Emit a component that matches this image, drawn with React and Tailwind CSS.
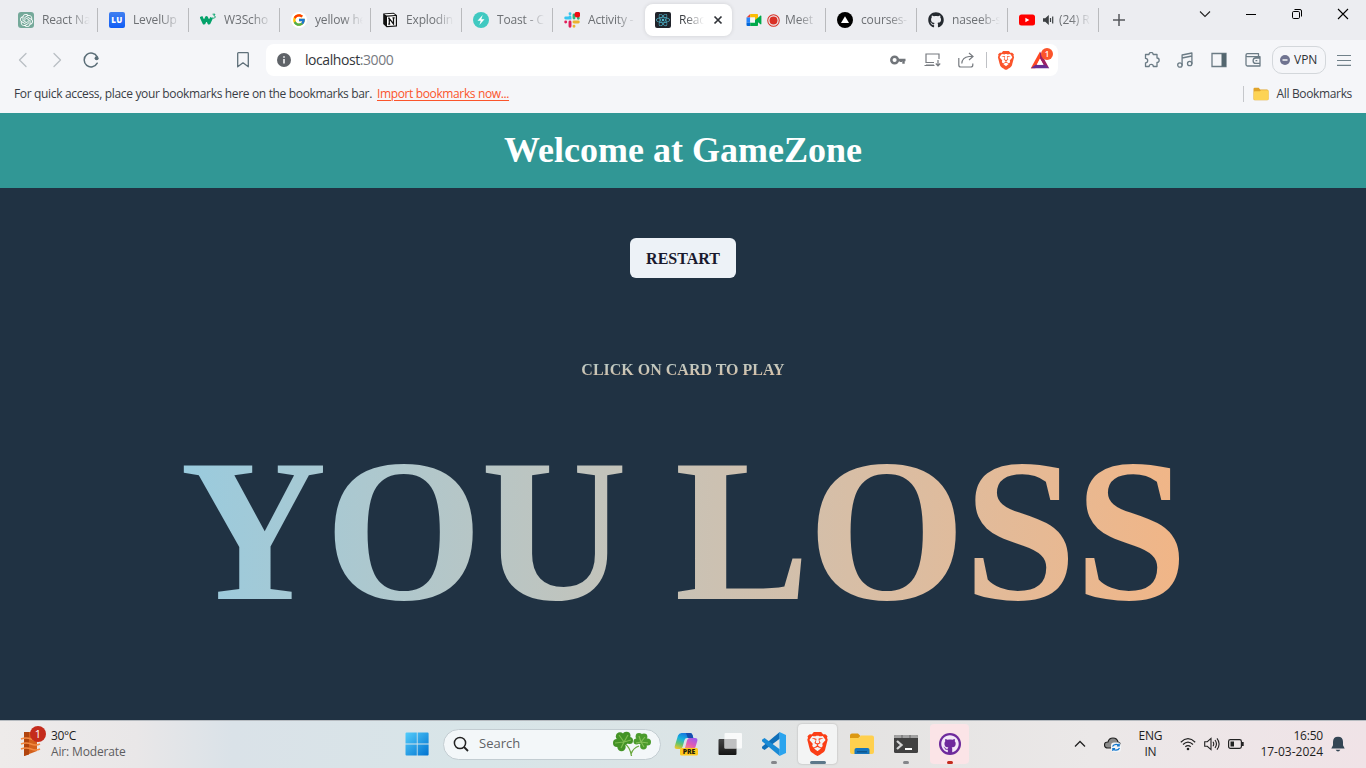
import React from "react";
import { FaReact, FaGithub } from "react-icons/fa";
import { FaBrave } from "react-icons/fa6";
import { SiOpenai } from "react-icons/si";
import { FcGoogle } from "react-icons/fc";

const Favicon = {
  gpt: <span className="flex size-4 items-center justify-center rounded-[3px] bg-[#75a99a]"><SiOpenai className="size-[13px] text-white" /></span>,
  levelup: <span className="flex size-4 items-center justify-center rounded-[2px] bg-gradient-to-b from-[#3f7ff0] to-[#0d5cf5] text-[8px] font-extrabold tracking-[0.3px] text-white">LU</span>,
  w3: (
    <svg viewBox="0 0 16 16" className="size-4">
      <path d="M1 4.6 4 11 6.500 5.600 9 11 11.600 5.600" fill="none" stroke="#04a26a" strokeWidth="3" strokeLinejoin="round" />
      <path d="M12.6 2.200H15l-1.100 1.500c1.700 0 1.600 2.500-.1 2.500-.6 0-1-.2-1.300-.6" fill="none" stroke="#04a26a" strokeWidth="1" />
    </svg>
  ),
  google: <span className="flex size-4 items-center justify-center rounded-full bg-white"><FcGoogle className="size-[14px]" /></span>,
  notion: (
    <svg viewBox="0 0 16 16" className="size-4">
      <path d="M1.2 1.4 11.6.8l3.4 2.5v11.2l-10.4.8-3.4-3.4z" fill="#111" />
      <path d="M2.3 2.2 11.4 1.7l1.9 1.4-8.7.5z" fill="#fff" />
      <path d="M5 4.7l8.8-.6v9.3L5 14.1z" fill="#fff" />
      <path d="M7.3 12V6.5l4.2 5.4V5.8M6.2 6.4h1.6M10.5 5.8h2.2M6.2 12h2" fill="none" stroke="#111" strokeWidth="1.25" />
    </svg>
  ),
  toast: (
    <svg viewBox="0 0 16 16" className="size-4">
      <circle cx="8" cy="8" r="8" fill="#40c9c1" />
      <path d="M9.7 3 4.5 8.8h3.2L6.4 13l5.1-5.8H8.3z" fill="#fff" />
    </svg>
  ),
  slack: (
    <svg viewBox="0 0 16 16" className="size-4">
      <g strokeWidth="2.900" strokeLinecap="round" fill="none">
        <path d="M6 1.700h.01M1.700 6H6V5" stroke="#36c5f0" />
        <path d="M10 6V3M14.300 6.300h.01" stroke="#2eb67d" />
        <path d="M10 10h4.300M10 14.300h.01" stroke="#ecb22e" />
        <path d="M6 10v4.300M1.700 10h.01" stroke="#e01e5a" />
      </g>
      <circle cx="13.400" cy="2.600" r="2.900" fill="#f00b12" />
    </svg>
  ),
  react: <span className="flex size-4 items-center justify-center rounded-[2px] bg-[#20232a]"><FaReact className="size-[14px] text-[#4fb9d0]" /></span>,
  meet: (
    <svg viewBox="0 0 16 16" className="size-4">
      <path d="M.5 5.500 4.200 2v3.500z" fill="#ea4335" />
      <path d="M4.200 2h6.800c.6 0 1 .4 1 1v4L9 9V5.500H4.200z" fill="#fbbc04" />
      <path d="M.5 5.500h3.700v5H.5z" fill="#2684fc" />
      <path d="M.5 10.500h3.700V14H1.500a1 1 0 0 1-1-1z" fill="#0066da" />
      <path d="M4.200 10.500H9V8l3-2.300 2.500-2.100c.4-.3.9 0 .9.5v7.700c0 .5-.5.8-.9.5l-2.500-2V13c0 .6-.4 1-1 1H4.200z" fill="#00a94b" />
      <path d="M4.200 5.500H9v5H4.200z" fill="#f4f6f8" />
    </svg>
  ),
  vercel: (
    <svg viewBox="0 0 16 16" className="size-4">
      <circle cx="8" cy="8" r="8" fill="#000" />
      <path d="M8 4.2 12 11H4z" fill="#fff" />
    </svg>
  ),
  github: <FaGithub className="size-4 text-[#24292f]" />,
  youtube: (
    <svg viewBox="0 0 16 16" className="size-4">
      <rect x="0" y="2.5" width="16" height="11" rx="2.5" fill="#f00" />
      <path d="M6.4 5.8v4.4L10.3 8z" fill="#fff" />
    </svg>
  ),
};

function TabTitle({ children, className = "" }) {
  return (
    <span className={"block min-w-0 flex-1 whitespace-nowrap tracking-[-0.15px] [mask-image:linear-gradient(to_right,#000_calc(100%-20px),transparent)] " + className}>
      {children}
    </span>
  );
}

function Tab({ icon, title, extra, bare }) {
  return (
    <div className="flex h-10 w-[91px] shrink-0 items-center pl-[11px]">
      {Favicon[icon]}
      {extra}
      <TabTitle className={extra ? "ml-[5px] text-[#6d7074]" : "ml-2 text-[#6d7074]"}>{title}</TabTitle>
      <span className={bare ? "ml-[7px] h-6 w-px" : "ml-[7px] h-6 w-px bg-[#b9babd]"} />
    </div>
  );
}

function Speaker() {
  return (
    <svg viewBox="0 0 12 12" className="ml-[7px] size-3 shrink-0">
      <path d="M1 4.200h2.200L6.800 1v10L3.200 7.800H1z" fill="#3c4043" />
      <path d="M8.500 4v4M10.700 2.600v6.800" stroke="#3c4043" strokeWidth="1.200" />
    </svg>
  );
}

function TabStrip() {
  return (
    <div className="flex h-10 bg-[#ecedf1] pl-[7px] text-[12px]">
      <Tab icon="gpt" title="React Na" />
      <Tab icon="levelup" title="LevelUp |" />
      <Tab icon="w3" title="W3Scho" />
      <Tab icon="google" title="yellow he" />
      <Tab icon="notion" title="Explodin" />
      <Tab icon="toast" title="Toast - C" />
      <Tab icon="slack" title="Activity -" bare />
      <div className="flex w-[91px] shrink-0 items-center">
        <div className="ml-[1px] flex h-8 w-[87px] items-center rounded-lg bg-white pl-[10px] shadow-[0_0_4px_rgba(0,0,0,0.12)]">
          {Favicon.react}
          <TabTitle className="ml-2 text-[#3b3e43]">Reac</TabTitle>
          <svg viewBox="0 0 10 10" className="mr-[9px] ml-[9px] size-[10px] shrink-0">
            <path d="M1.5 1.5l7 7M8.5 1.5l-7 7" stroke="#303338" strokeWidth="1.7" />
          </svg>
        </div>
      </div>
      <Tab
        icon="meet"
        title="Meet"
        extra={
          <svg viewBox="0 0 14 14" className="ml-[5px] size-[13px] shrink-0">
            <circle cx="7" cy="7" r="6.2" fill="none" stroke="#d93025" strokeWidth="1.1" />
            <circle cx="7" cy="7" r="4.3" fill="#d93025" />
          </svg>
        }
      />
      <Tab icon="vercel" title="courses-" />
      <Tab icon="github" title="naseeb-s" />
      <Tab icon="youtube" title="(24) R" extra={<Speaker />} />
      <div className="flex w-10 items-center justify-center">
        <svg viewBox="0 0 12 12" className="size-3">
          <path d="M6 0v12M0 6h12" stroke="#55585c" strokeWidth="1.5" />
        </svg>
      </div>
      <div className="ml-auto flex h-7 items-center text-black">
        <svg viewBox="0 0 12 12" className="mr-[34px] size-3"><path d="M1 3.5l5 5 5-5" fill="none" stroke="#222" strokeWidth="1.100" /></svg>
        <svg viewBox="0 0 12 12" className="mr-[34px] size-3"><path d="M1 6.5h10" stroke="#000" /></svg>
        <svg viewBox="0 0 12 12" className="mr-[34px] size-3">
          <rect x="1.5" y="3.5" width="7" height="7" rx="1.2" fill="none" stroke="#000" />
          <path d="M3.5 1.5H9A1.5 1.5 0 0 1 10.500 3v5.500" fill="none" stroke="#000" />
        </svg>
        <svg viewBox="0 0 12 12" className="mr-[17px] size-3"><path d="M1 1l10 10M11 1L1 11" stroke="#000" strokeWidth="1.1" /></svg>
      </div>
    </div>
  );
}

const stroke = { fill: "none", stroke: "#6b7b85", strokeWidth: 1.3, strokeLinecap: "round", strokeLinejoin: "round" };

function Toolbar() {
  return (
    <div className="flex h-10 items-center bg-[#f5f6f9]">
      <svg viewBox="0 0 16 16" className="ml-[15px] size-4"><path d="M11 1.500 4.500 8l6.500 6.500" {...stroke} stroke="#b9bfc4" /></svg>
      <svg viewBox="0 0 16 16" className="ml-[18px] size-4"><path d="M5 1.500 11.500 8 5 14.500" {...stroke} stroke="#b9bfc4" /></svg>
      <svg viewBox="0 0 16 16" className="ml-[18px] size-4">
        <path d="M14.200 4.800A6.900 6.900 0 1 0 14.200 11.200" {...stroke} stroke="#5b6e78" strokeWidth="1.500" />
        <circle cx="13.600" cy="6.200" r="2" fill="#5b6e78" />
      </svg>
      <svg viewBox="0 0 16 16" className="ml-[136px] size-4"><path d="M2.700 1.500Q2.700.7 3.500.7h9q.8 0 .8.8v13.300L8 10.800l-5.300 4z" {...stroke} stroke="#5f707a" /></svg>
      <div className="ml-[15px] flex h-8 w-[792px] items-center rounded-lg bg-white">
        <svg viewBox="0 0 14 14" className="ml-[11px] size-[14px]">
          <circle cx="7" cy="7" r="7" fill="#5f6368" />
          <path d="M7 6v4.500M7 3.200v1.500" stroke="#fff" strokeWidth="1.500" />
        </svg>
        <span className="ml-[14px] text-[14px] leading-[18px] tracking-[-0.43px] text-[#33363b]">localhost<span className="text-[#777a7f]">:3000</span></span>
        <div className="ml-auto flex items-center">
          <svg viewBox="0 0 16 10" className="mr-[18px] h-[10px] w-4">
            <circle cx="4.600" cy="5" r="3.300" fill="none" stroke="#71757a" strokeWidth="2.500" />
            <path d="M8 5h7.500M13.500 5v3.800M10.800 5v2" stroke="#71757a" strokeWidth="2.400" fill="none" />
          </svg>
          <svg viewBox="0 0 17 14" className="mr-[17px] h-[14px] w-[17px]">
            <path d="M15 6V1H2v8.500h8M.5 12.500h10M2 12h8M14 7v5.500M11.800 10.500 14 12.800l2.200-2.300" fill="none" stroke="#777b80" strokeWidth="1.200" />
          </svg>
          <svg viewBox="0 0 16 16" className="mr-3 size-4">
            <path d="M.8 6v7q0 2 2 2h10q2 0 2-2v-1.500M3.800 11.500Q4.200 5.200 11 4.500h3.500M11 1l4 3.500L11 8" fill="none" stroke="#777b80" strokeWidth="1.200" />
          </svg>
          <span className="mr-[10px] h-4 w-px bg-[#bfc1c5]" />
          <FaBrave className="mr-[15px] h-[19px] w-[18px] text-[#fb542b]" />
          <span className="relative mr-[8px] block h-5 w-[20px]">
            <svg viewBox="0 0 20 20" className="size-5">
              <path d="M10 1.500.8 18.200h4.500L10 9z" fill="#ff4724" />
              <path d="M10 1.500v7.500l4 6.500 5.200 2.700z" fill="#9e1f63" />
              <path d="M.8 18.200h18.400L15.200 14.800H5.500z" fill="#662d91" />
              <path d="M10 8.500l3.300 6.300H6.700z" fill="#fff" />
            </svg>
            <span className="absolute -top-[2px] left-[11px] flex size-3 items-center justify-center rounded-full bg-[#fb542b] text-[8px] leading-none font-semibold text-white">1</span>
          </span>
        </div>
      </div>
      <div className="ml-auto flex items-center">
        <svg viewBox="0 0 16 16" className="mr-[17px] size-4">
          <path d="M1.500 2.500h3.500a2 2 0 1 1 4.200 0h3.800v3.500a2 2 0 1 1 0 4.300v4.200H9.300a2 2 0 0 0-4.200 0H1.500v-3.700a2.200 2.200 0 0 0 0-4.400z" {...stroke} />
        </svg>
        <svg viewBox="0 0 16 16" className="mr-[18px] size-4">
          <circle cx="2.900" cy="13" r="2.200" {...stroke} /><circle cx="12.700" cy="11.500" r="2.200" {...stroke} />
          <path d="M5.100 13V3l9.800-2v10.500M5.100 6l9.800-2" {...stroke} />
        </svg>
        <svg viewBox="0 0 16 16" className="mr-[18px] size-4">
          <path d="M1 1.500h14v13H1z" fill="none" stroke="#6b7b85" strokeWidth="1.300" /><path d="M10.500 1.500H15v13h-4.500z" fill="#53666f" />
        </svg>
        <svg viewBox="0 0 16 16" className="mr-[11px] size-4">
          <path d="M15 6V4.700H2.500A1.500 1.500 0 0 1 2.500 1.700H13.500v3M1 3v9.500q0 1.500 1.500 1.500H15v-2.500M15 6h-4.200a2.700 2.700 0 0 0 0 5.400H15z" {...stroke} />
          <path d="M11 8.700h.8" {...stroke} />
        </svg>
        <span className="flex h-7 w-[54px] items-center rounded-[10px] border border-[#d3d7db] pl-[7px] text-[12px] text-[#2d3035]">
          <svg viewBox="0 0 10 10" className="mr-1 size-[10px]"><circle cx="5" cy="5" r="5" fill="#6f7390" /><path d="M2.500 5h5" stroke="#fff" strokeWidth="1.400" /></svg>
          VPN
        </span>
        <svg viewBox="0 0 14 12" className="mr-[15px] ml-[11px] h-3 w-[14px]"><path d="M0 1.500h14M0 6.500h14M0 11.400h14" stroke="#71818a" strokeWidth="1.200" /></svg>
      </div>
    </div>
  );
}

function Folder() {
  return (
    <svg viewBox="0 0 16 14" className="mr-2 h-[14px] w-4">
      <path d="M.5 2Q.5.800 1.700.800h4L7.200 2.500H14Q15.500 2.500 15.500 4v8q0 1.300-1.300 1.300H1.800Q.5 13.300.5 12z" fill="#e0a32a" />
      <path d="M.8 5.500Q.8 4.300 2 4.300h5l1-1h6.500q1 0 1 1v7.500q0 1.200-1.200 1.200H2Q.8 13 .8 12z" fill="#fdd354" />
    </svg>
  );
}

function Bookmarks() {
  return (
    <div className="flex h-[33px] items-center bg-[#f5f6f9] pr-[14px] pb-[6px] pl-[14px] text-[12px] text-[#393d45]">
      <span className="tracking-[-0.34px] whitespace-nowrap">For quick access, place your bookmarks here on the bookmarks bar.</span>
      <span className="ml-[5px] tracking-[-0.37px] whitespace-nowrap text-[#fb542b] underline underline-offset-2">Import bookmarks now...</span>
      <span className="mr-[9px] ml-auto h-4 w-px bg-[#c5c7cb]" />
      <Folder />
      <span className="tracking-[-0.35px]">All Bookmarks</span>
    </div>
  );
}

function Game() {
  return (
    <main className="flex h-[607px] flex-col items-center bg-[#203243] font-['Liberation_Serif',serif] font-bold">
      <h1 className="flex h-[75px] w-full items-center justify-center bg-[#319795] pb-[2px] text-[36px] text-white">Welcome at GameZone</h1>
      <button className="mt-[50px] flex h-10 w-[106px] items-center justify-center rounded-md bg-[#edf2f7] pt-[2px] text-[16px] text-[#1a1a2e]">RESTART</button>
      <p className="mt-[80px] w-full bg-gradient-to-br from-[#90d2e6] to-[#f8b480] bg-clip-text text-center text-[16px] leading-6 text-transparent">CLICK ON CARD TO PLAY</p>
      <p className="mt-[29px] w-[1006px] bg-gradient-to-r from-[#99cbde] to-[#f1b586] bg-clip-text text-center text-[203px] leading-[240px] tracking-[-1.900px] whitespace-nowrap text-transparent">YOU LOSS</p>
    </main>
  );
}

function Dock({ children, active, bar, className = "" }) {
  return (
    <div className={"relative flex h-10 w-[39px] items-center justify-center rounded-[4px] " + (active || "") + " " + className}>
      {children}
      {bar && <span className={"absolute bottom-0 h-[3px] rounded-full " + bar} />}
    </div>
  );
}

function Taskbar() {
  return (
    <footer className="flex h-12 items-center border-t border-[#b6bbc0] bg-[linear-gradient(90deg,#eeebea_0%,#e9e7e8_10%,#dae2e8_17%,#d8e5e8_35%,#dbe4e6_50%,#e4e3e2_62%,#ebe8e8_80%,#f0e3e7_100%)] pb-px text-[12px] text-[#1e1e1e]">
      <div className="relative ml-[20px] flex h-full w-[385px] items-center">
        <svg viewBox="0 0 22 26" className="h-[26px] w-[22px]">
          <path d="M4 1h13v19L4 25z" fill="#d3601c" />
          <path d="M4 1h5v22.500L4 25z" fill="#b1440d" />
          <path d="M1 8q5-2 10 0t9 0M1 13q5-2 10 0t9 0M1 18q5-2 10 0t9 0" fill="none" stroke="#f28a43" strokeWidth="1.500" />
        </svg>
        <span className="absolute top-[5px] left-[10px] flex size-4 items-center justify-center rounded-full bg-[#c42b1c] text-[11px] text-white">1</span>
        <div className="ml-[9px] leading-4">
          <div className="tracking-[-0.400px]">30°C</div>
          <div className="tracking-[-0.150px] text-[#5d5d60]">Air: Moderate</div>
        </div>
      </div>
      <svg viewBox="0 0 24 24" className="size-6">
        <defs><linearGradient id="win" x1="0" y1="0" x2="1" y2="1"><stop offset="0" stopColor="#54cdfb" /><stop offset="1" stopColor="#0072d0" /></linearGradient></defs>
        <path d="M1.500.5h10.300v11H.5v-10q0-1 1-1zM12.600.5h10q1 0 1 1v10h-11zM.5 12.500h11.300v11H1.500q-1 0-1-1zM12.600 12.500h11v10q0 1-1 1h-10z" fill="url(#win)" />
      </svg>
      <div className="ml-[14px] flex h-[31px] w-[218px] items-center rounded-full border border-[#c3cdd2] bg-[#f3f7f9] pl-[9px] text-[13px] text-[#5f6265]">
        <svg viewBox="0 0 16 16" className="size-4"><circle cx="7" cy="7" r="5.600" fill="none" stroke="#222" strokeWidth="1.500" /><path d="M11 11l4 4" stroke="#222" strokeWidth="1.800" /></svg>
        <span className="ml-[10px]">Search</span>
        <svg viewBox="0 0 40 26" className="mr-[8px] ml-auto h-[26px] w-10">
          <path d="M13 13q5 3 6.500 12M27 15q-6 2-8 8" fill="none" stroke="#69a83c" strokeWidth="1.300" />
          <g fill="#439326">
            <circle cx="8" cy="5.500" r="4.200" /><circle cx="14.500" cy="4.800" r="4" /><circle cx="5" cy="12" r="4" />
            <circle cx="9.500" cy="16" r="4.200" /><circle cx="17.500" cy="9.500" r="3.500" /><circle cx="12" cy="10" r="4" />
          </g>
          <path d="M12 11 7 4M12 11l-9 1M12 11l-3 6M12 11l4-7M12 11l7-2" stroke="#7dbc50" strokeWidth="1.200" />
          <g fill="#4b9b2d">
            <circle cx="27" cy="5.500" r="3.400" /><circle cx="32" cy="5.800" r="3.400" /><circle cx="24.500" cy="10.500" r="3" />
            <circle cx="35.500" cy="11" r="3.500" /><circle cx="31.500" cy="15" r="3.400" /><circle cx="29.500" cy="10" r="3.500" />
          </g>
          <path d="M29 11l-2-6M29 11l4-5M29 11l-5 1M29 11l7 1M29 11l3 5" stroke="#86c159" strokeWidth="1.100" />
        </svg>
      </div>
      <div className="ml-[5px] flex items-center">
        <Dock>
          <svg viewBox="0 0 24 24" className="size-6">
            <defs>
              <linearGradient id="cpa" x1="0.600" y1="0" x2="0.200" y2="1"><stop stopColor="#1673df" /><stop offset=".4" stopColor="#18b3dc" /><stop offset=".7" stopColor="#65c36b" /><stop offset="1" stopColor="#ecc62c" /></linearGradient>
              <linearGradient id="cpb" x1="0.800" y1="0" x2="0.200" y2="1"><stop stopColor="#9a5cf0" /><stop offset=".5" stopColor="#e05bb4" /><stop offset="1" stopColor="#ff9868" /></linearGradient>
            </defs>
            <path d="M7.500 1H16q2 0 2.500 2l.8 3H13q-2 0-2.500 2L8.500 15q-.7 2-2.500 2H3q-3 0-2.200-3L4 3.500Q5 1 7.500 1z" fill="url(#cpa)" />
            <path d="M12 1h4q2 0 2.500 2l.8 3h-5.500z" fill="#174fae" />
            <path d="M15.500 6H21q3 0 2.300 3l-2 6.500Q20.500 18 18 18H8.500q2 0 2.500-2l2-7.500Q13.500 6 15.500 6z" fill="url(#cpb)" />
            <rect x="6" y="16" width="18" height="7.500" rx="1.500" fill="#ffc91e" />
            <text x="15" y="22.200" textAnchor="middle" fontSize="6.800" fontWeight="800" fill="#221c08">PRE</text>
          </svg>
        </Dock>
        <Dock className="ml-[5px]">
          <svg viewBox="0 0 24 24" className="size-6">
            <defs><linearGradient id="dk" x1="0" y1="0" x2="0" y2="1"><stop stopColor="#444" /><stop offset="1" stopColor="#151515" /></linearGradient></defs>
            <rect x="0.500" y="7" width="18" height="16" rx="1" fill="url(#dk)" />
            <rect x="6.500" y="1" width="17.500" height="15.500" rx="1" fill="#fff" fillOpacity=".8" /><path d="M6.500 7h12v9.500h-12z" fill="#bfc0c1" />
          </svg>
        </Dock>
        <Dock className="ml-[5px]" bar="w-[6px] bg-[#84868a]">
          <svg viewBox="0 0 24 24" className="size-6">
            <path d="M17.700 0v6.800L2.500 18 0 16.300v-1.500z" fill="#0f6fb9" />
            <path d="M17.700 24v-6.800L2.500 6 0 7.700v1.500z" fill="#198ad5" />
            <path d="M17.500 0 24 3v18l-6.500 3z" fill="#2ba4ee" />
          </svg>
        </Dock>
        <Dock className="ml-[5px]" active="bg-[#f3f4f4] shadow-[0_0_2px_rgba(0,0,0,0.250)]" bar="w-4 bg-[#5c788a]">
          <FaBrave className="h-6 w-[23px] text-[#fb3e16]" />
        </Dock>
        <Dock className="ml-[5px]">
          <svg viewBox="0 0 24 24" className="size-6">
            <path d="M0 3.500Q0 1.500 2 1.500h6l2.500 2.500-2.500 2.500H0z" fill="#dc9812" />
            <path d="M0 6h8.500l2.500-2.500H22q2 0 2 2V20q0 2-2 2H2q-2 0-2-2z" fill="#ffd04e" />
            <path d="M4.500 22v-4q0-2 2-2h11q2 0 2 2v4z" fill="#1675bd" /><path d="M7 19h10v1.500H7z" fill="#0c568f" />
          </svg>
        </Dock>
        <Dock className="ml-[5px]" bar="w-[6px] bg-[#84868a]">
          <svg viewBox="0 0 24 24" className="size-6">
            <rect x="0" y="3" width="24" height="18" rx="1.500" fill="#414141" /><path d="M0 6V4.500Q0 3 1.500 3h21Q24 3 24 4.500V6z" fill="#a2a2a2" />
            <path d="M8 3v3M16 3v3" stroke="#666" /><path d="M3 9l4.500 4L3 17" fill="none" stroke="#d4d4d4" strokeWidth="2.300" /><path d="M11 17h7" stroke="#fff" strokeWidth="2" />
          </svg>
        </Dock>
        <Dock className="ml-[5px]" active="bg-[#fbe4e7]" bar="w-[6px] bg-[#c42b1c]">
          <span className="flex size-[22px] items-center justify-center rounded-full bg-[#6e2a9c]">
            <FaGithub className="size-[18px] text-[#f4e9f8]" />
          </span>
        </Dock>
      </div>
      <div className="mr-[21px] ml-auto flex h-full items-center">
        <svg viewBox="0 0 12 12" className="mr-[18px] size-3"><path d="M1 8.500l5-5 5 5" fill="none" stroke="#222" strokeWidth="1.300" /></svg>
        <svg viewBox="0 0 17 16" className="mr-[17px] h-4 w-[17px]">
          <path d="M4 12Q.5 12 .5 9T4 6q1-4 5-4t5 4q2.500.5 2.500 3t-3 3z" fill="#8b8b8b" stroke="#222" strokeWidth="1.200" />
          <rect x="7" y="6.500" width="10" height="9.500" rx="3" fill="#f2f5f8" />
          <path d="M8.500 10.500q1.200-2.700 5-2l1.700 1.300M15.200 7.500v2.300h-2.300M15.500 12q-1.200 2.700-5 2L8.800 12.700M8.800 15v-2.300h2.300" fill="none" stroke="#1276cc" strokeWidth="1.200" />
        </svg>
        <div className="mr-[18px] w-6 text-center leading-4 tracking-[-0.2px]"><div>ENG</div><div>IN</div></div>
        <svg viewBox="0 0 16 14" className="mr-2 h-[14px] w-4">
          <path d="M.8 5.200q7.200-7 14.400 0M3 7.500q5-4.800 10 0M5.300 9.800q2.700-2.500 5.400 0" fill="none" stroke="#222" strokeWidth="1.200" /><circle cx="8" cy="12" r="1.300" fill="#222" />
        </svg>
        <svg viewBox="0 0 16 14" className="mr-2 h-[14px] w-4">
          <path d="M.7 4.700h2.600L7 1.400v11.200L3.300 9.300H.7z" fill="none" stroke="#222" strokeWidth="1.100" /><path d="M9 4.800q1.500 2.200 0 4.400M11 3q2.900 4 0 8M13 1.300q4.200 5.700 0 11.400" fill="none" stroke="#222" strokeWidth="1.100" />
        </svg>
        <svg viewBox="0 0 16 12" className="mr-[16px] h-3 w-4">
          <rect x=".6" y="1.600" width="12.800" height="8.800" rx="1.800" fill="none" stroke="#222" strokeWidth="1.200" /><path d="M2.500 3.500H6v5H2.500z" fill="#222" /><path d="M14.800 4v4" stroke="#222" strokeWidth="1.800" />
        </svg>
        <div className="mr-[8px] text-right leading-4"><div className="tracking-[-0.200px]">16:50</div><div>17-03-2024</div></div>
        <svg viewBox="0 0 14 16" className="h-4 w-[14px]">
          <path d="M7 .7q5 0 5 5.300v3.200l1.700 3.300H.3L2 9.200V6Q2 .7 7 .7z" fill="#334554" /><path d="M4.700 13.700h4.600Q8.500 15.500 7 15.500t-2.300-1.800z" fill="#334554" />
        </svg>
      </div>
    </footer>
  );
}

export default function App() {
  return (
    <div className="flex h-[768px] w-[1366px] flex-col overflow-hidden font-['Open_Sans','Noto_Sans',sans-serif]">
      <TabStrip />
      <Toolbar />
      <Bookmarks />
      <Game />
      <Taskbar />
    </div>
  );
}
